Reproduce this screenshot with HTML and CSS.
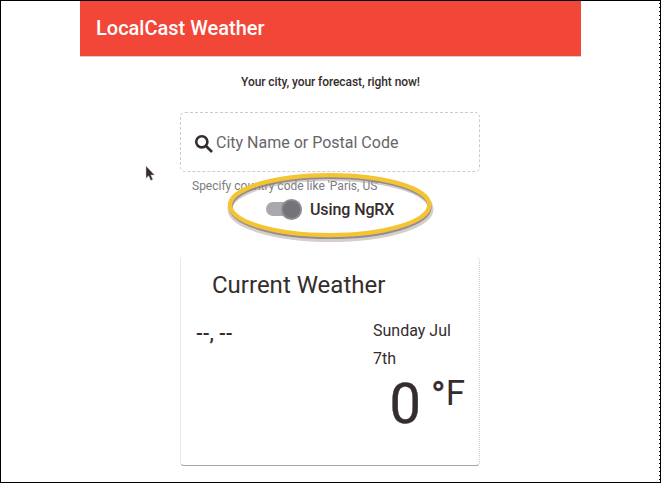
FILE: index.html
```html
<!DOCTYPE html>
<html lang="en">
<head>
<meta charset="utf-8">
<title>LocalCast Weather</title>
<link rel="stylesheet" href="styles.css">
</head>
<body>
<div class="frame">
  <main class="app">
    <header class="toolbar"><span>LocalCast Weather</span></header>
    <p class="tagline"><span>Your city, your forecast, right now!</span></p>
    <section class="content">
      <div class="search">
        <svg class="search-icon" width="20" height="20" viewBox="0 0 20 20"><circle cx="7.8" cy="7.8" r="5.6"/><path d="M12 12l6 6"/></svg>
        <span class="placeholder">City Name or Postal Code</span>
      </div>
      <div class="hint"><span>Specify country code like 'Paris, US'</span></div>
      <div class="toggle">
        <div class="track"><div class="thumb"></div></div>
        <span class="toggle-label">Using NgRX</span>
      </div>
      <article class="card">
        <h2><span>Current Weather</span></h2>
        <div class="row">
          <div class="place">--, --</div>
          <div class="date">Sunday Jul<br>7th</div>
        </div>
        <div class="temperature"><span class="value">0</span><span class="unit"><span class="degree">°</span>F</span></div>
      </article>
    </section>
  </main>
  <svg class="highlight" width="220" height="82" viewBox="220 168 220 82">
    <ellipse class="shade-soft" cx="330.5" cy="209" rx="100.5" ry="30.5"/>
    <ellipse class="shade" cx="330.2" cy="207" rx="99.5" ry="30"/>
    <ellipse class="ring" cx="329.7" cy="205.1" rx="99.7" ry="30"/>
  </svg>
  <svg class="cursor" width="12" height="18" viewBox="0 0 12 18"><path d="M1 1v12.2l2.7-2.4 2 4.6 2.1-.9-2-4.5H9.5z"/></svg>
</div>
</body>
</html>
```
FILE: styles.css
```css
* { box-sizing: border-box; }
body {
  margin: 0;
  background: #fff;
  color: #352d2d;
  font-family: Roboto, "Liberation Sans", sans-serif;
}
.frame {
  position: relative;
  width: 661px;
  height: 483px;
  overflow: hidden;
  border: 1px solid #000;
}
.frame::after {
  content: "";
  position: absolute;
  top: 0;
  right: 0;
  width: 1px;
  height: 100%;
  background: repeating-linear-gradient(#fff 0 2px, #000 2px 3px, #fff 3px 4px);
}
.app { width: 501px; margin-left: 79px; }
.toolbar {
  height: 55px;
  padding-left: 16px;
  background: #f24638;
  box-shadow: 0 1px 0 #d8cccc;
  color: #fff;
  font-size: 20px;
  font-weight: 500;
  line-height: 55px;
}
.tagline {
  margin: 17px 0 0;
  height: 20px;
  font-size: 12px;
  font-weight: 500;
  letter-spacing: -.08px;
  line-height: 18px;
  text-align: center;
}
.content { width: 300px; margin: 19px 0 0 100px; }
.search {
  display: flex;
  align-items: center;
  height: 60px;
  padding-left: 13px;
  border: 1px dashed #d2caca;
  border-radius: 5px;
}
.search-icon {
  margin-top: 3px;
  fill: none;
  stroke: #352d2d;
  stroke-width: 2.6;
}
.placeholder { margin-left: 2px; color: #66666a; font-size: 16px; }
.hint {
  height: 23px;
  padding: 5px 0 0 12px;
  color: #7c7b80;
  font-size: 12px;
  line-height: 18px;
}
.toggle {
  display: flex;
  align-items: center;
  height: 28px;
  padding-left: 86px;
}
.track {
  display: flex;
  align-items: center;
  justify-content: flex-end;
  width: 36px;
  height: 14px;
  border-radius: 7px;
  background: #aba7aa;
}
.thumb {
  flex: none;
  width: 21px;
  height: 21px;
  border-radius: 50%;
  background: radial-gradient(circle, #747478 0 8px, #8b8c91 9px);
}
.toggle-label {
  margin-left: 8px;
  font-size: 16px;
  font-weight: 500;
  letter-spacing: -.1px;
}
.card {
  height: 209px;
  margin-top: 34px;
  border: 1px dotted #d2caca;
  border-top: 0;
  border-bottom: 1px solid #aaa2a2;
  border-radius: 4px;
}
.card h2 {
  margin: 0;
  padding: 10px 0 0 31px;
  font-size: 24px;
  font-weight: 400;
  line-height: 36px;
}
.row {
  display: flex;
  justify-content: space-between;
  height: 70px;
  padding: 14px 13px 0 15px;
  line-height: 28px;
}
.place { font-size: 20px; font-weight: 500; line-height: 32px; }
.date { width: 93px; font-size: 16px; }
.temperature {
  display: flex;
  align-items: flex-start;
  justify-content: flex-end;
  padding: 2px 14px 0 0;
}
.value { font-size: 56px; line-height: 59px; -webkit-text-stroke: .4px currentColor; }
.unit { display: flex; margin-left: 10px; font-size: 35px; line-height: 37px; }
.degree { font-size: 39px; line-height: 42px; -webkit-text-stroke: .4px currentColor; }
.highlight { position: absolute; left: 219px; top: 167px; fill: none; }
.shade-soft { stroke: #b09b97; stroke-width: 5; opacity: .5; }
.shade { stroke: #74747a; stroke-width: 4; opacity: .7; }
.ring { stroke: #f5c432; stroke-width: 4.3; }
.cursor { position: absolute; left: 144px; top: 164px; fill: #352d2d; stroke: #cbc3c3; stroke-width: .5; }
```
